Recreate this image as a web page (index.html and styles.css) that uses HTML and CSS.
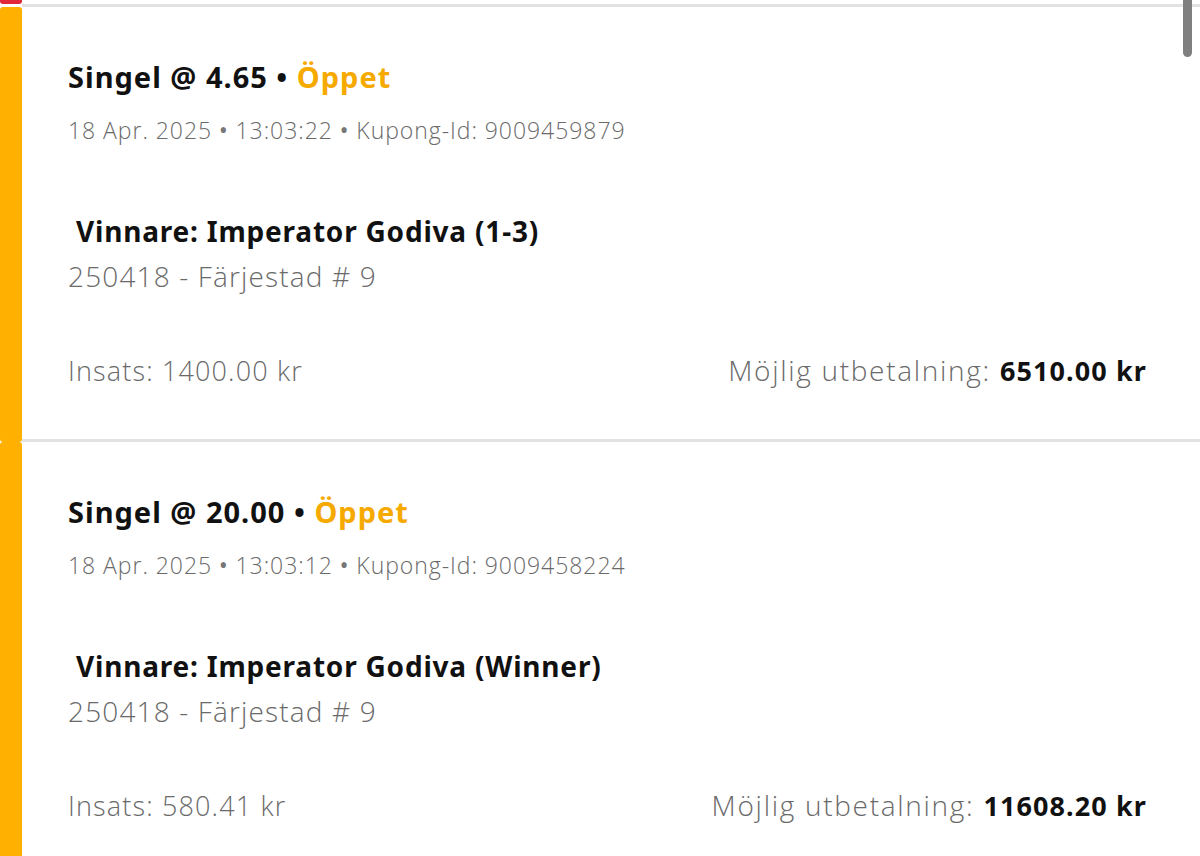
FILE: index.html
```html
<!DOCTYPE html>
<html lang="sv">
<head>
<meta charset="utf-8">
<title>Kuponger</title>
<link rel="stylesheet" href="styles.css">
</head>
<body>
<div class="list">
  <div class="stub">
    <div class="stub-bar"></div>
    <div class="stub-line"></div>
  </div>

  <div class="card">
    <div class="bar"></div>
    <div class="content">
      <div class="title">Singel @ 4.65 • <span class="status">Öppet</span></div>
      <div class="meta">18 Apr. 2025 <span class="dot">•</span> 13:03:22 <span class="dot">•</span> Kupong-Id: 9009459879</div>
      <div class="selection">Vinnare: Imperator Godiva (1-3)</div>
      <div class="event">250418 - Färjestad # 9</div>
      <div class="amounts">
        <div class="stake">Insats: 1400.00 kr</div>
        <div class="payout">Möjlig utbetalning: <b>6510.00 kr</b></div>
      </div>
    </div>
  </div>

  <div class="card">
    <div class="bar"></div>
    <div class="content">
      <div class="title">Singel @ 20.00 • <span class="status">Öppet</span></div>
      <div class="meta">18 Apr. 2025 <span class="dot">•</span> 13:03:12 <span class="dot">•</span> Kupong-Id: 9009458224</div>
      <div class="selection">Vinnare: Imperator Godiva (Winner)</div>
      <div class="event">250418 - Färjestad # 9</div>
      <div class="amounts">
        <div class="stake">Insats: 580.41 kr</div>
        <div class="payout">Möjlig utbetalning: <b>11608.20 kr</b></div>
      </div>
    </div>
  </div>
</div>
<div class="scrollbar"></div>
</body>
</html>
```
FILE: styles.css
```css
html, body {
  margin: 0;
  padding: 0;
  background: #ffffff;
  overflow: hidden;
  height: 856px;
}

body {
  font-family: "Noto Sans", "Open Sans", sans-serif;
  color: #111111;
}

.list {
  display: flex;
  flex-direction: column;
}

.stub {
  display: flex;
  height: 7px;
}

.stub-bar {
  width: 22px;
  height: 4px;
  background: #e0283a;
  border-radius: 0 0 3px 3px;
}

.stub-line {
  flex: 1;
  margin-top: 4px;
  height: 3px;
  background: #e2e2e2;
}

.card {
  display: flex;
}

.bar {
  width: 22px;
  flex: none;
  background: #ffb000;
  border-radius: 3px;
}

.content {
  flex: 1;
  border-bottom: 3px solid #e2e2e2;
  padding: 52px 53px 50px 46px;
  display: flex;
  flex-direction: column;
}

.title {
  font-size: 29px;
  font-weight: 700;
  line-height: 36px;
  letter-spacing: 1px;
}

.status {
  color: #f6aa00;
}

.meta {
  margin-top: 20px;
  font-family: "Open Sans", "Noto Sans", sans-serif;
  font-weight: 300;
  font-size: 23px;
  line-height: 30px;
  letter-spacing: 0.95px;
  color: #6a6a6a;
}

.dot {
  font-family: "Noto Sans", sans-serif;
  font-weight: 400;
  color: #777777;
}

.selection {
  margin-top: 68px;
  margin-left: 8px;
  font-size: 28px;
  font-weight: 700;
  line-height: 36px;
  letter-spacing: 0.8px;
}

.event {
  margin-top: 10px;
  font-family: "Open Sans", "Noto Sans", sans-serif;
  font-weight: 300;
  font-size: 28px;
  line-height: 34px;
  letter-spacing: 1.15px;
  color: #6a6a6a;
}

.amounts {
  margin-top: 59px;
  display: flex;
  justify-content: space-between;
  align-items: baseline;
  font-family: "Open Sans", "Noto Sans", sans-serif;
  font-weight: 300;
  line-height: 36px;
  color: #6a6a6a;
}

.stake {
  font-size: 27px;
  letter-spacing: 1.15px;
}

.payout {
  font-size: 28px;
  letter-spacing: 1.7px;
}

.payout b {
  font-family: "Noto Sans", "Open Sans", sans-serif;
  font-size: 27px;
  color: #111111;
  font-weight: 700;
  letter-spacing: 1.1px;
}

.scrollbar {
  position: absolute;
  top: 0;
  left: 1183px;
  width: 9px;
  height: 57px;
  background: #7f7f7f;
  border-radius: 0 0 5px 5px;
}
```
